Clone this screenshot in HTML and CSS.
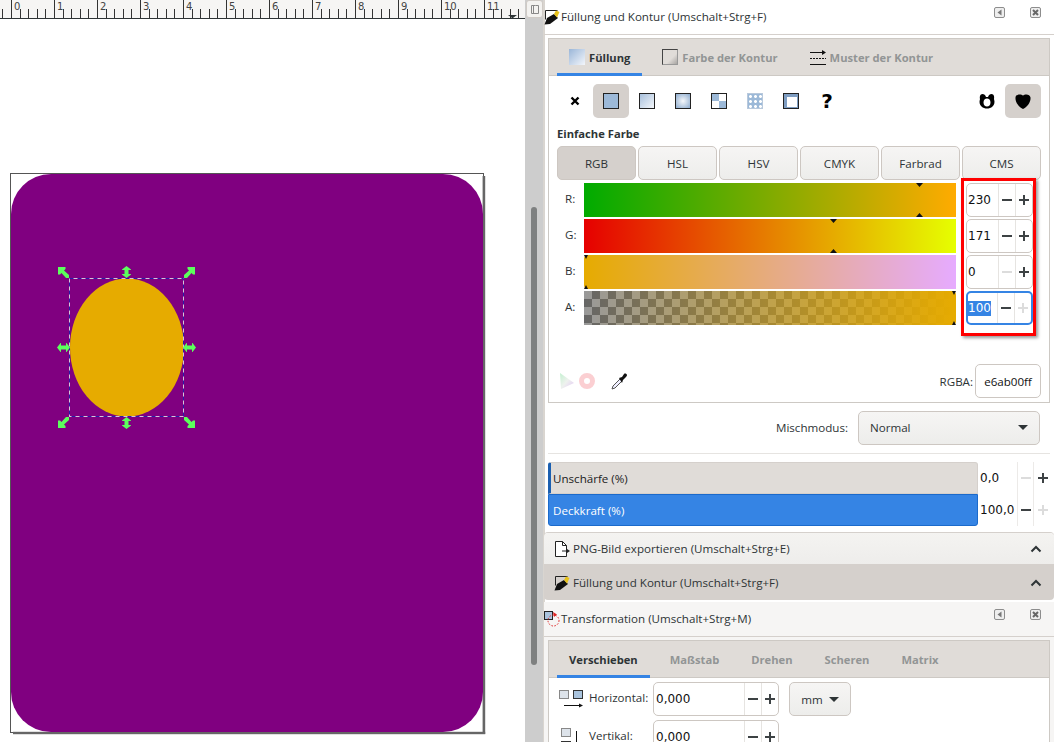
FILE: index.html
```html
<!DOCTYPE html>
<html lang="de">
<head>
<meta charset="utf-8">
<title>Füllung und Kontur</title>
<link rel="stylesheet" href="styles.css">
</head>
<body>
<svg class="defs" width="0" height="0">
  <symbol id="pen" viewBox="0 0 16 16">
    <path d="M1.500 1.500h12M1.500 1.500v9" fill="none" stroke="#222"/>
    <path d="M10 5l4 4-8 6-5.500 .5L3 9z" fill="#111"/>
    <path d="M12 1.500 15.500 3 13 8.500 10 5z" fill="#e8c21a"/>
  </symbol>
  <symbol id="corner" viewBox="0 0 11 11">
    <path d="M0 0h7.500v2L6 3.500 11 8v3H8L3.500 6 2 7.500H0z" fill="#5cff5c"/>
  </symbol>
  <symbol id="updown" viewBox="0 0 9 12">
    <path d="M4.500 0 9 3.500V4H6.500v4H9v.5L4.500 12 0 8.500V8h2.500V4H0v-.5z" fill="#5cff5c"/>
  </symbol>
  <symbol id="leftright" viewBox="0 0 13 9">
    <path d="M0 4.500 3.500 0H4v2.500h5V0h.5L13 4.500 9.500 9H9V6.500H4V9h-.5z" fill="#5cff5c"/>
  </symbol>
  <symbol id="chev" viewBox="0 0 12 8">
    <path d="M1.500 6.500 6 2l4.500 4.500" fill="none" stroke="#2e3436" stroke-width="2"/>
  </symbol>
  <symbol id="dock" viewBox="0 0 11 11">
    <rect x=".5" y=".5" width="10" height="10" rx="1.500" fill="#eee" stroke="#8d8d8d"/>
    <path d="M7.500 2.500v6l-4-3z" fill="#777"/>
  </symbol>
  <symbol id="close" viewBox="0 0 11 11">
    <rect x=".5" y=".5" width="10" height="10" rx="1.500" fill="#eee" stroke="#8d8d8d"/>
    <path d="M3 3l5 5M8 3 3 8" stroke="#666" stroke-width="2"/>
  </symbol>
</svg>
<div class="app">
  <div class="canvas-col">
    <div class="ruler">
      <div class="tick-cell first"></div>
      <div class="tick-cell">0</div><div class="tick-cell">1</div><div class="tick-cell">2</div>
      <div class="tick-cell">3</div><div class="tick-cell">4</div><div class="tick-cell">5</div>
      <div class="tick-cell">6</div><div class="tick-cell">7</div><div class="tick-cell">8</div>
      <div class="tick-cell">9</div><div class="tick-cell">10</div><div class="tick-cell">11</div>
      <span class="ruler-mark"></span>
    </div>
    <svg class="drawing" width="525" height="723" viewBox="0 19 525 723">
      <rect x="10.500" y="173.500" width="473" height="559" fill="none" stroke="#555"/>
      <rect x="482.600" y="176" width="2.600" height="558" fill="#666"/>
      <rect x="13" y="731.800" width="472.200" height="2.400" fill="#666"/>
      <path d="M51 174h392a40 40 0 0 1 40 40v478a40 40 0 0 1-40 40H51a40 40 0 0 1-40-40V214a40 40 0 0 1 40-40z" fill="#800080"/>
      <ellipse cx="127" cy="347.500" rx="57" ry="69" fill="#e6ab00"/>
      <rect x="69.500" y="278.500" width="114" height="138" fill="none" stroke="#d9c3d9" stroke-width="1"/>
      <rect x="69.500" y="278.500" width="114" height="138" fill="none" stroke="#2a1aa8" stroke-width="1" stroke-dasharray="4 4"/>
      <use href="#corner" x="58" y="267" width="11" height="11"/>
      <use href="#corner" x="-195" y="267" width="11" height="11" transform="scale(-1 1)"/>
      <use href="#corner" x="58" y="-428" width="11" height="11" transform="scale(1 -1)"/>
      <use href="#corner" x="-195" y="-428" width="11" height="11" transform="scale(-1 -1)"/>
      <use href="#updown" x="122" y="266" width="9" height="12"/>
      <use href="#updown" x="122" y="417" width="9" height="12"/>
      <use href="#leftright" x="57" y="343" width="13" height="9"/>
      <use href="#leftright" x="183" y="343" width="13" height="9"/>
    </svg>
  </div>

  <div class="vscroll">
    <div class="lock-btn">
      <svg width="12" height="14" viewBox="0 0 12 14"><path d="M2.500 3.500h4l3 0v8h-7zM4.500 3.500v8" fill="none" stroke="#888"/></svg>
    </div>
    <div class="thumb"></div>
  </div>

  <div class="dock">
    <section class="dialog">
      <header class="dialog-title">
        <svg class="title-icon" width="16" height="16"><use href="#pen"/></svg>
        <span class="title-text">Füllung und Kontur (Umschalt+Strg+F)</span>
        <svg class="ctl ctl-first" width="11" height="11"><use href="#dock"/></svg>
        <svg class="ctl" width="11" height="11"><use href="#close"/></svg>
      </header>
      <div class="dialog-body">
        <div class="frame">
          <nav class="tabs">
            <div class="tab active">
              <span class="tab-ico ico-fill"></span>Füllung
            </div>
            <div class="tab">
              <span class="tab-ico ico-stroke"></span>Farbe der Kontur
            </div>
            <div class="tab">
              <svg class="tab-svg" width="16" height="16" viewBox="0 0 16 16"><path d="M0 3.500h14M0 15.500h16" stroke="#111"/><path d="M12 1l4 2.500L12 6z" fill="#111"/><path d="M0 9.500h16" stroke="#111" stroke-dasharray="2 1"/></svg>Muster der Kontur
            </div>
          </nav>
          <div class="fill-page">
            <div class="mode-row">
              <div class="mode-btn"><svg width="10" height="10" viewBox="0 0 10 10"><path d="M1.500 1.500l7 7M8.500 1.500l-7 7" stroke="#000" stroke-width="2.400"/></svg></div>
              <div class="mode-btn on"><span class="sw sw-flat"></span></div>
              <div class="mode-btn"><span class="sw sw-lin"></span></div>
              <div class="mode-btn"><span class="sw sw-rad"></span></div>
              <div class="mode-btn"><span class="sw sw-check"></span></div>
              <div class="mode-btn"><span class="sw sw-swatch"></span></div>
              <div class="mode-btn"><span class="sw sw-frame"></span></div>
              <div class="mode-btn"><span class="mode-q">?</span></div>
              <div class="mode-btn push">
                <svg width="16" height="16" viewBox="0 0 16 16"><path fill-rule="evenodd" d="M3.500 1C5 1 6.500 2 7 4h2c.5-2 2-3 3.500-3C15 1 15.500 4 15 6c1 3 .5 6-1.500 7.500C12 15 10 15.500 8 15.500S4 15 2.500 13.500C.5 12 0 9 1 6 .5 4 1 1 3.500 1zM8 5.500c-2 0-3.500 1.500-3.500 4s1.500 4 3.500 4 3.500-1.500 3.500-4-1.500-4-3.500-4z" fill="#000"/></svg>
              </div>
              <div class="mode-btn on">
                <svg width="16" height="16" viewBox="0 0 16 16"><path d="M8 2.500C6.500 1 1 .5 .5 4.500 0 9 4 14.500 8 16c4-1.500 8-7 7.500-11.500C15 .5 9.500 1 8 2.500z" fill="#000"/></svg>
              </div>
            </div>
            <div class="flat-title">Einfache Farbe</div>
            <div class="model-row">
              <div class="model-btn on">RGB</div>
              <div class="model-btn">HSL</div>
              <div class="model-btn">HSV</div>
              <div class="model-btn">CMYK</div>
              <div class="model-btn">Farbrad</div>
              <div class="model-btn">CMS</div>
            </div>
            <div class="color-grid">
              <span class="c-label">R:</span>
              <div class="slider s-r"><i class="mk top" style="left:335px"></i><i class="mk bot" style="left:335px"></i></div>
              <div class="spin"><span class="spin-val">230</span><span class="step minus"></span><span class="step plus"></span></div>

              <span class="c-label">G:</span>
              <div class="slider s-g"><i class="mk top" style="left:249px"></i><i class="mk bot" style="left:249px"></i></div>
              <div class="spin"><span class="spin-val">171</span><span class="step minus"></span><span class="step plus"></span></div>

              <span class="c-label">B:</span>
              <div class="slider s-b round-l"><i class="mk top" style="left:0"></i><i class="mk bot" style="left:0"></i></div>
              <div class="spin"><span class="spin-val">0</span><span class="step minus off"></span><span class="step plus"></span></div>

              <span class="c-label">A:</span>
              <div class="slider s-a round-r"><i class="mk top" style="left:372px"></i><i class="mk bot" style="left:372px"></i></div>
              <div class="spin focus"><span class="spin-val"><span class="sel">100</span></span><span class="step minus"></span><span class="step plus off"></span></div>

              <div class="annot"></div>
            </div>
            <div class="rgba-row">
              <svg class="gamut" width="15" height="16" viewBox="0 0 15 16"><defs><linearGradient id="g1" x1="0" y1="0" x2="1" y2="1"><stop offset="0" stop-color="#c4f0d0"/><stop offset=".5" stop-color="#eef2ee"/><stop offset="1" stop-color="#e2c6f4"/></linearGradient></defs><path d="M0 0l14 10L1 16z" fill="url(#g1)"/></svg>
              <span class="ring"></span>
              <svg class="picker" width="16" height="17" viewBox="0 0 16 17"><path d="M1 16l1-3 7-7 2 2-7 7z" fill="#eef" stroke="#555"/><path d="M8 5l3-1 2-3c1-1 3 0 3 1s-1 2-2 3l-2 2-1 3z" fill="#111"/></svg>
              <span class="rgba-label">RGBA:</span>
              <div class="rgba-input">e6ab00ff</div>
            </div>
          </div>
        </div>
        <div class="blend-row">
          <span class="blend-label">Mischmodus:</span>
          <div class="select"><span>Normal</span><i class="caret"></i></div>
        </div>
        <div class="sep"></div>
        <div class="scale-row">
          <div class="scale blur">Unschärfe (%)</div>
          <span class="scale-val">0,0</span><span class="step minus off"></span><span class="step plus"></span>
        </div>
        <div class="scale-row">
          <div class="scale opacity">Deckkraft (%)</div>
          <span class="scale-val">100,0</span><span class="step minus"></span><span class="step plus off"></span>
        </div>
      </div>
    </section>

    <div class="fold light">
      <svg class="fold-ico" width="16" height="16" viewBox="0 0 16 16"><path d="M1.500 .5h7l4 4v11h-11z" fill="#fff" stroke="#222"/><path d="M8.500 .5v4h4" fill="none" stroke="#222"/><path d="M8 10h6" stroke="#222"/><path d="M13 8l3 2-3 2z" fill="#222"/></svg>
      <span>PNG-Bild exportieren (Umschalt+Strg+E)</span>
      <svg class="chev" width="12" height="8"><use href="#chev"/></svg>
    </div>
    <div class="fold dark">
      <svg class="fold-ico" width="16" height="16"><use href="#pen"/></svg>
      <span>Füllung und Kontur (Umschalt+Strg+F)</span>
      <svg class="chev" width="12" height="8"><use href="#chev"/></svg>
    </div>

    <section class="dialog second">
      <header class="dialog-title">
        <svg class="title-icon" width="16" height="16" viewBox="0 0 16 16"><rect x=".5" y=".5" width="8" height="8" fill="#a9c3dd" stroke="#222"/><circle cx="9.500" cy="9.500" r="5.500" fill="none" stroke="#d22" stroke-dasharray="1.500 1.500"/><path d="M9 1l4 2.500L10 6z" fill="#d22"/></svg>
        <span class="title-text">Transformation (Umschalt+Strg+M)</span>
        <svg class="ctl ctl-first" width="11" height="11"><use href="#dock"/></svg>
        <svg class="ctl" width="11" height="11"><use href="#close"/></svg>
      </header>
      <div class="dialog-body shade">
        <div class="frame open">
          <nav class="tabs">
            <div class="tab active">Verschieben</div>
            <div class="tab">Maßstab</div>
            <div class="tab">Drehen</div>
            <div class="tab">Scheren</div>
            <div class="tab">Matrix</div>
          </nav>
          <div class="move-page">
            <div class="move-row">
              <svg class="move-ico" width="26" height="18" viewBox="0 0 26 18"><rect x=".5" y=".5" width="9" height="8" fill="#dde3ea" stroke="#888"/><rect x="14.500" y=".5" width="9" height="8" fill="#a9c3dd" stroke="#333"/><path d="M5 15.500h17" stroke="#111"/><path d="M20 13.500l4 2-4 2z" fill="#111"/></svg>
              <span class="move-label">Horizontal:</span>
              <div class="spin wide"><span class="spin-val">0,000</span><span class="step minus"></span><span class="step plus"></span></div>
              <div class="unit">mm<i class="caret"></i></div>
            </div>
            <div class="move-row">
              <svg class="move-ico" width="26" height="18" viewBox="0 0 26 18"><rect x="2.500" y=".5" width="9" height="8" fill="#dde3ea" stroke="#888"/><rect x="2.500" y="13.500" width="9" height="8" fill="#a9c3dd" stroke="#333"/><path d="M17.500 3v15" stroke="#111"/></svg>
              <span class="move-label">Vertikal:</span>
              <div class="spin wide"><span class="spin-val">0,000</span><span class="step minus"></span><span class="step plus"></span></div>
            </div>
          </div>
        </div>
      </div>
    </section>
  </div>
</div>
</body>
</html>
```

FILE: styles.css
```css
* { box-sizing: border-box; }
html, body { margin: 0; padding: 0; height: 100%; overflow: hidden; background: #fff; }
body { font: 11.6px "Open Sans", sans-serif; color: #2e3436; }
.defs { display: block; height: 0; }
.app { display: flex; width: 1054px; height: 742px; overflow: hidden; }

/* canvas */
.canvas-col { width: 525px; flex: none; display: flex; flex-direction: column; }
.ruler {
  position: relative; height: 19px; flex: none; display: flex; overflow: hidden;
  background: #f6f5f4; border-bottom: 1px solid #2e3436;
}
.tick-cell {
  width: 43px; flex: none; height: 18px; padding-left: 2px;
  font: 10px/14px "DejaVu Sans", sans-serif; color: #444;
  border-left: 1px solid #333;
  background: repeating-linear-gradient(to right, transparent 0 7.6px, #333 7.6px 8.6px) 0 9px / 100% 9px no-repeat;
}
.tick-cell.first { margin-left: -32px; }
.ruler-mark {
  position: absolute; left: 508px; top: 15px; width: 9px; height: 3px;
  background: #2e3436; clip-path: polygon(0 0, 100% 0, 55% 100%, 45% 100%);
}
.drawing { display: block; flex: none; }

/* scrollbar */
.vscroll { width: 19px; flex: none; background: #cdcdcd; border-right: 1px solid #d9d5d0; }
.lock-btn {
  width: 17px; height: 18px; margin-left: 1px; background: #f3f2f0; border: 1px solid #cfcac5;
  border-radius: 3px; display: flex; align-items: center; justify-content: center;
}
.thumb { width: 6px; height: 458px; margin: 189px 0 0 6px; background: #7e8080; border-radius: 3px; }

/* dock */
.dock { width: 510px; flex: none; display: flex; flex-direction: column; background: #fff; box-shadow: inset 1px 0 #d9d5d0; }
.dialog-title { height: 34px; display: flex; align-items: center; flex: none; }
.title-icon { flex: none; margin-right: 1px; }
.title-text { flex: 1; padding-bottom: 2px; }
.ctl { flex: none; margin: 0 13px 9px 0; }
.ctl-first { margin-right: 25px; }
.dialog-body { border-top: 1px solid #d5d0cc; padding: 3px 3px 0 4px; height: 497px; }
.frame { border: 1px solid #cdc9c4; height: 365px; width: 502px; }
.tabs { height: 37px; background: #e0dcd8; border-bottom: 1px solid #cdc9c4; display: flex; gap: 8px; padding-left: 8px; }
.tab {
  height: 37px; padding: 2px 12px 0; display: flex; align-items: center; gap: 4px;
  font-weight: 700; font-size: 11.2px; color: #929595; border-bottom: 3px solid transparent; margin-bottom: -1px;
}
.tab.active { color: #2e3436; border-bottom-color: #3584e4; }
.tab-ico { width: 16px; height: 16px; display: block; flex: none; }
.tab-svg { flex: none; }
.ico-fill { background: linear-gradient(135deg, #9ab6d8, #f3f6fb); }
.ico-stroke { border: 1px solid #444; background: linear-gradient(135deg, #e0dcd8 60%, #a8a5a2); border-right-color: #999; border-bottom-color: #999; }

.fill-page { padding: 8px 8px 0; }
.mode-row { display: flex; height: 34px; }
.mode-btn { width: 36px; height: 34px; display: flex; align-items: center; justify-content: center; border-radius: 5px; }
.mode-btn.on { background: #d5d0cc; }
.mode-btn.push { margin-left: auto; }
.mode-q { font: 700 20px "DejaVu Sans", sans-serif; color: #000; }
.sw { width: 16px; height: 16px; display: block; border: 1px solid #222; }
.sw-flat { background: #9cb9d8; }
.sw-lin { background: linear-gradient(135deg, #a8c0dc, #f4f7fb); }
.sw-rad { background: radial-gradient(circle, #f6f8fb, #8daccf); }
.sw-check { background: conic-gradient(#fff 0 25%, #9cb9d8 0 50%, #fff 0 75%, #9cb9d8 0); }
.sw-swatch { background: radial-gradient(circle, #fff 30%, #9cb9d8 50%) 0 0 / 5px 5px; border-color: #b9c9dc; }
.sw-frame { background: linear-gradient(#fff, #fff) 3px 3px / 10px 10px no-repeat, #7e9dc2; }

.flat-title { height: 17px; margin-top: 7px; font-weight: 700; font-size: 11.2px; line-height: 17px; }
.model-row { display: flex; gap: 2px; margin-top: 4px; }
.model-btn {
  width: 79px; height: 34px; display: flex; align-items: center; justify-content: center;
  border: 1px solid #cdc7c2; border-radius: 5px;
  background: linear-gradient(#f6f5f4, #ededeb);
}
.model-btn.on { background: #d5d0cc; }

.color-grid {
  position: relative; display: grid; grid-template-columns: 27px 372px 67px;
  column-gap: 0; row-gap: 2px; grid-auto-rows: 34px; margin-top: 3px; align-items: center;
}
.c-label { padding: 0 0 3px 8px; }
.slider { position: relative; height: 34px; }
.s-r { background: linear-gradient(to right, #00ab00, #ffab00); }
.s-g { background: linear-gradient(to right, #e60000, #e6ff00); }
.s-b { background: linear-gradient(to right, #e6ab00, #e6abff); }
.s-a {
  background:
    linear-gradient(to right, rgba(230,171,0,0), #e6ab00),
    conic-gradient(#666 0 25%, #999 0 50%, #666 0 75%, #999 0) 0 0 / 16px 16px;
}
.round-l { border-radius: 4px 0 0 4px; }
.round-r { border-radius: 0 4px 4px 0; }
.mk { position: absolute; width: 7px; height: 4px; margin-left: -3px; background: #111; }
.mk.top { top: 0; clip-path: polygon(0 0, 100% 0, 50% 100%); }
.mk.bot { bottom: 0; clip-path: polygon(50% 0, 100% 100%, 0 100%); }
.s-b .mk { margin-left: 0; width: 4px; }
.s-a .mk { margin-left: -4px; width: 4px; }

.spin {
  display: flex; width: 67px; height: 34px; margin-left: 10px;
  border: 1px solid #cdc7c2; border-radius: 5px; background: #fff;
  font: 12px "DejaVu Sans", sans-serif; color: #111;
}
.spin-val { flex: 1; min-width: 0; display: flex; align-items: center; padding-left: 1px; }
.spin .step { height: 32px; border-left: 1px solid #e6e4e1; }
.step { position: relative; width: 17px; flex: none; display: block; }
.step::before { content: ""; position: absolute; left: 3px; top: 50%; width: 10px; height: 2px; margin-top: -1px; background: #3d4244; }
.plus::after { content: ""; position: absolute; left: 7px; top: 50%; width: 2px; height: 10px; margin-top: -5px; background: #3d4244; }
.off::before, .off::after { background: #dcdcdc; }
.spin.focus { border: 2px solid #3584e4; }
.spin.focus .step { height: 30px; }
.spin.focus .spin-val { padding-left: 0; }
.sel { background: #3584e4; color: #fff; padding: 0 0 1px; }
.annot {
  position: absolute; left: 404px; top: -5px; width: 75px; height: 158px;
  border: 3px solid #f00; box-shadow: 2px 2px 3px rgba(0,0,0,.4); pointer-events: none;
}

.rgba-row { display: flex; align-items: center; height: 34px; margin-top: 39px; }
.gamut { margin-left: 3px; flex: none; }
.ring { width: 16px; height: 16px; margin-left: 4px; border-radius: 50%; border: 5px solid #fbcfd2; background: #fff; flex: none; }
.picker { margin-left: 16px; flex: none; }
.rgba-label { margin-left: auto; margin-right: 2px; }
.rgba-input {
  width: 66px; height: 34px; border: 1px solid #cdc7c2; border-radius: 5px;
  display: flex; align-items: center; justify-content: center; color: #111;
}

.blend-row { display: flex; justify-content: flex-end; align-items: center; gap: 10px; margin: 8px 11px 0 0; height: 34px; }
.blend-label { padding-bottom: 2px; }
.select {
  width: 182px; height: 34px; display: flex; align-items: center; justify-content: space-between;
  padding: 0 11px 1px; border: 1px solid #cdc7c2; border-radius: 5px;
  background: linear-gradient(#f6f5f4, #ededeb);
}
.caret { display: block; width: 0; height: 0; border: 5px solid transparent; border-top: 5px solid #2e3436; border-bottom: 0; }
.sep { height: 1px; background: #e6e4e1; margin-top: 8px; width: 502px; }
.scale-row { display: flex; height: 32px; align-items: center; width: 502px; }
.scale-row .step { height: 32px; width: 16px; border-left: 1px solid #eceae8; }
.scale-row .plus { width: 17px; }
.scale-row .plus::before { left: 4px; }
.scale-row .plus::after { left: 8px; }
.sep + .scale-row { margin-top: 8px; }
.scale { width: 430px; height: 32px; flex: none; display: flex; align-items: center; padding-left: 4px; }
.blur { background: #e0dcd8; border: 1px solid #d5d0cc; border-left: 3px solid #1b5fb0; border-radius: 3px 3px 0 0; padding-left: 2px; color: #222; }
.opacity { background: #3584e4; color: #fff; border: 1px solid #1b6acb; border-radius: 0 0 3px 3px; }
.scale-val { width: 39px; flex: none; padding-left: 2px; font: 12px "DejaVu Sans", sans-serif; color: #111; }

.fold { height: 33px; display: flex; align-items: center; padding: 0 12px 0 10px; flex: none; }
.fold-ico { flex: none; margin-right: 3px; }
.fold span { flex: 1; }
.fold.light { margin-top: 2px; background: linear-gradient(#f4f3f1, #eeedeb); height: 32px; border-radius: 4px 4px 0 0; border-bottom: 1px solid #d5d0cc; box-shadow: 0 -1px 0 #d5d0cc; }
.fold.dark { background: #d5d0cc; height: 35px; border-radius: 0 0 4px 4px; }
.chev { flex: none; }

.second { flex: 1; background: #f6f5f4; margin-top: 2px; }
.shade { height: auto; padding-top: 3px; }
.frame.open { height: 110px; background: #fff; border-bottom: 0; }
.move-page { padding: 4px 0 0 10px; }
.move-row { display: flex; align-items: center; height: 34px; margin-bottom: 4px; }
.move-ico { flex: none; margin-right: 4px; }
.move-label { width: 64px; flex: none; padding-bottom: 3px; }
.spin.wide { width: 126px; margin-left: 0; }
.spin.wide .spin-val { padding-left: 2px; }
.unit {
  width: 62px; height: 34px; margin-left: 10px; display: flex; align-items: center; justify-content: center; gap: 6px;
  border: 1px solid #cdc7c2; border-radius: 5px; background: linear-gradient(#f6f5f4, #ededeb);
}
```
